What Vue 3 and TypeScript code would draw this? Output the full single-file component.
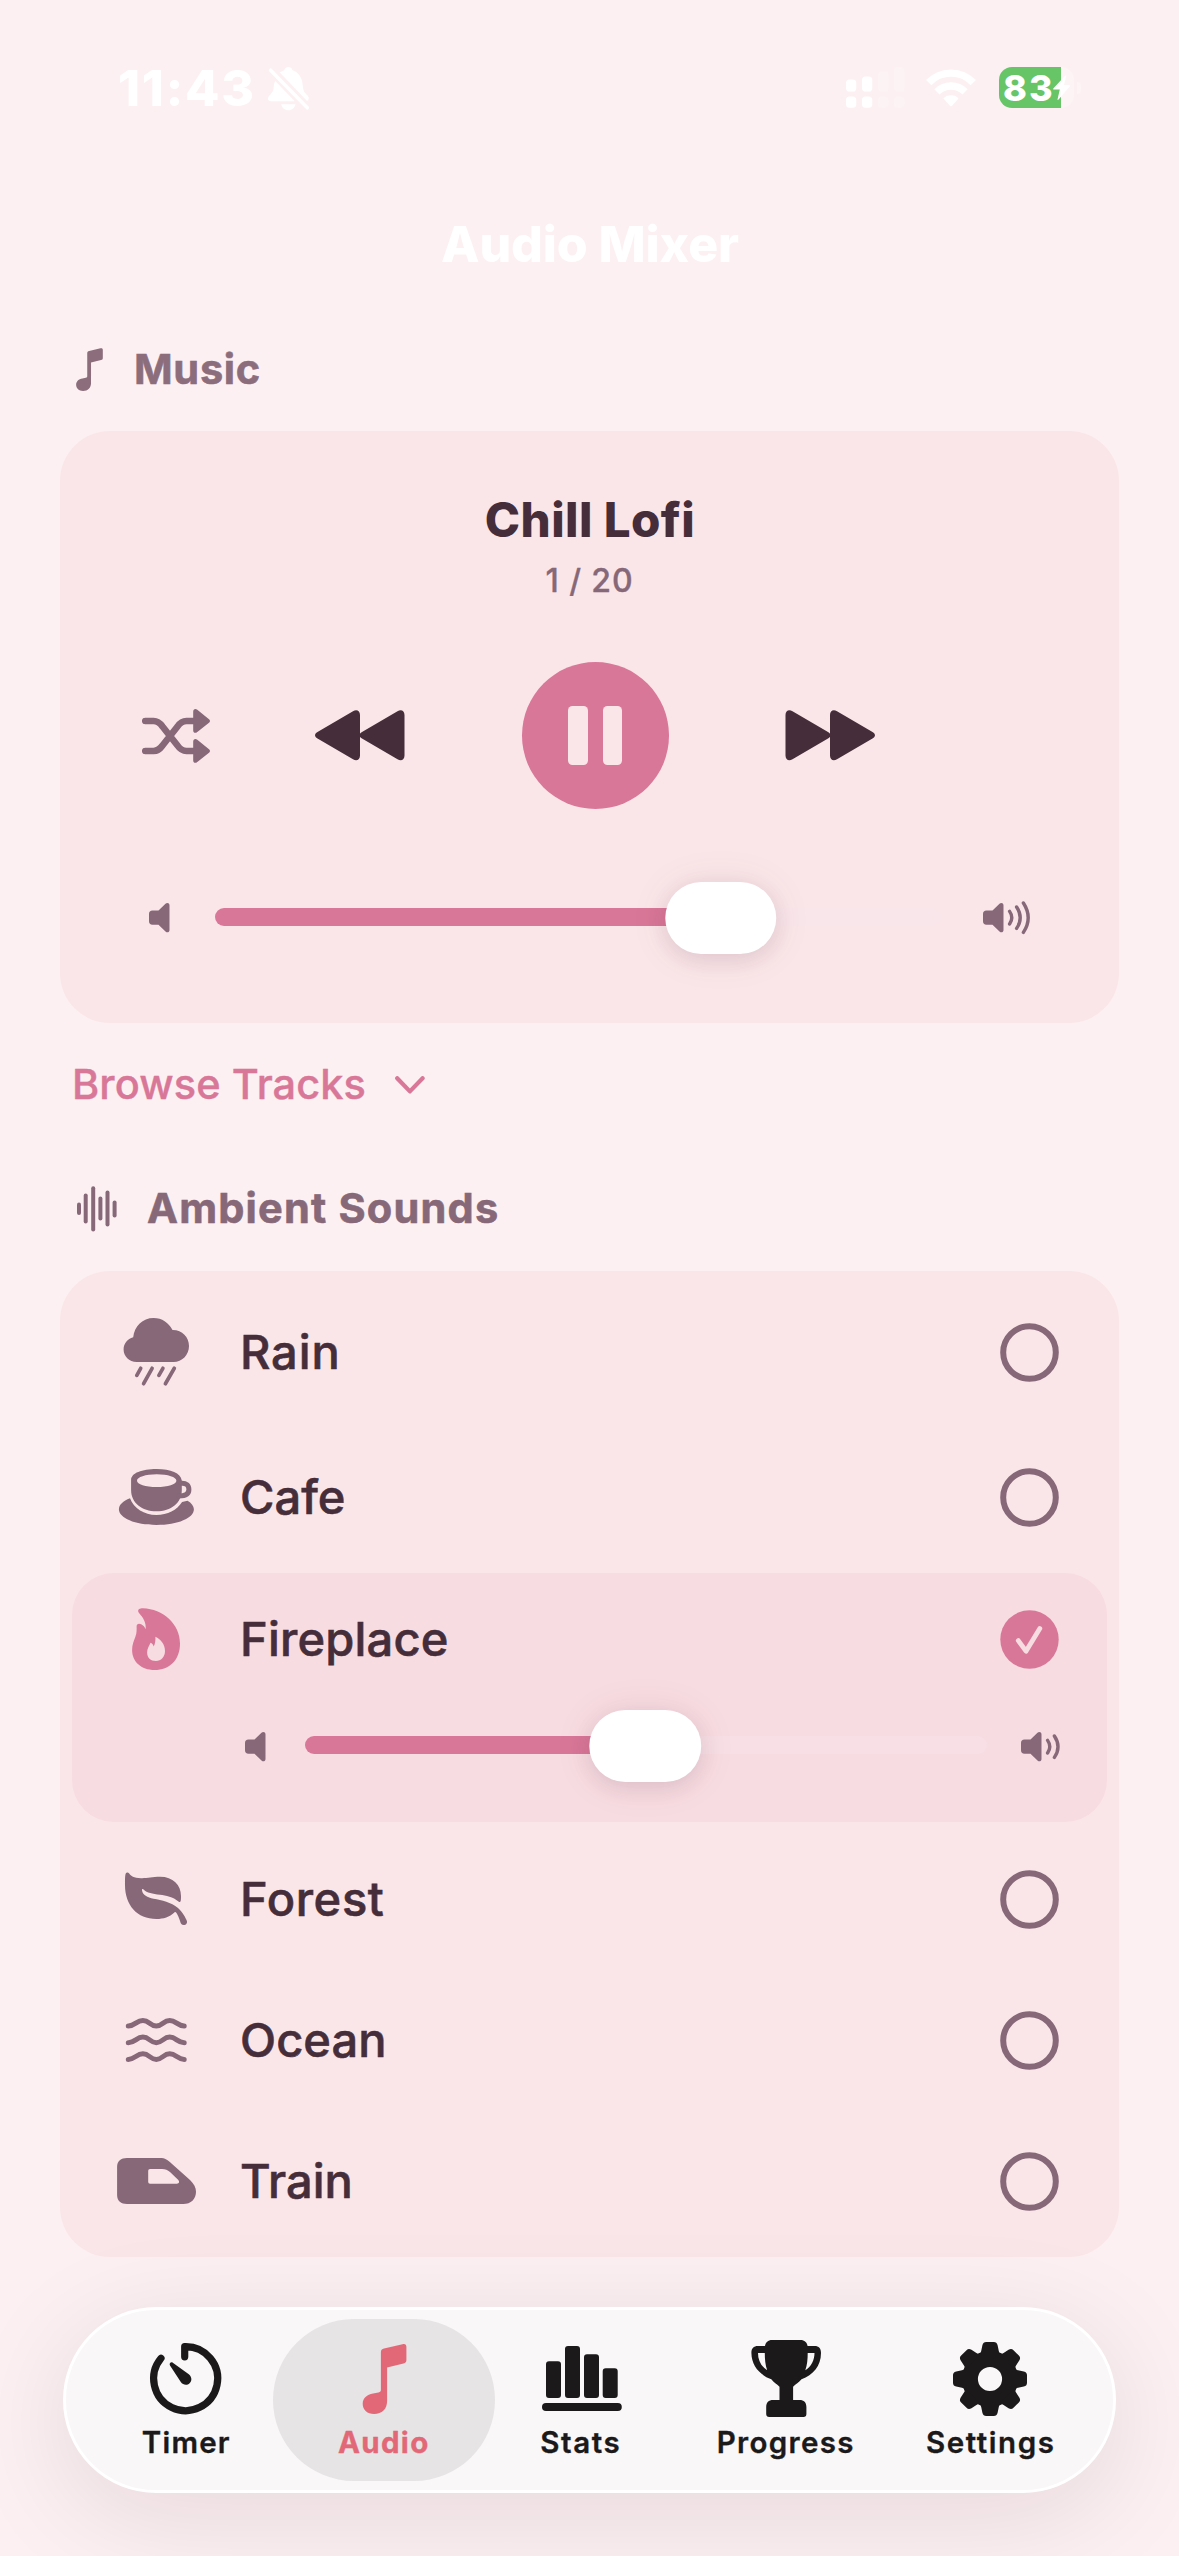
<script setup lang="ts">
import { ref } from 'vue'

interface Shape {
  d: string
  stroke?: number
}

interface Sound {
  id: string
  name: string
  spacing: number
  size: 'tall' | 'medium' | 'regular'
  icon: Shape[]
}

interface Tab {
  id: string
  label: string
  spacing: number
  width: number
  icon: Shape[]
}

const noteIcon =
  'M42 9.6L60.5 5.2C63 4.6 64.4 5.4 64.4 8V21C64.4 23 63.6 24 61.5 24.6L45.1 28.5V62C45.1 70 40 75 32 75C25.5 75 20.7 71 20.7 65C20.7 59 25 55.8 31 54.6L36.5 53.4C38.3 53 38.9 52.3 38.9 50.5V13.5C38.9 11 39.8 10.1 42 9.6Z'
const speakerIcon =
  'M3.5 7.5H9.5L16.5 .8C18 -.5 20.5 0 20.5 2.5V27C20.5 29.5 18 30 16.5 28.5L9.5 21.8H3.5C1.2 21.8 0 20.6 0 18.3V11C0 8.7 1.2 7.5 3.5 7.5Z'

const sounds: Sound[] = [
  {
    id: 'rain',
    name: 'Rain',
    spacing: 0.9,
    size: 'tall',
    icon: [
      { d: 'M22.8 52C15 52 9.6 46 9.6 39.5C9.6 33.5 13.5 29 19.2 27.3C20.5 16 28.5 8 39.6 8C48 8 54.5 12.5 58.5 20C68 19.8 75 27 75 36C75 45 68 52 59.6 52Z' },
      { d: 'M26.7 58.3L22.8 65.3M38.1 58.3L29.6 73.7M48.9 58.3L44.9 65.3M60.3 58.3L51.4 73.7', stroke: 3.7 },
    ],
  },
  {
    id: 'cafe',
    name: 'Cafe',
    spacing: 0,
    size: 'medium',
    icon: [
      { d: 'M17.1 25C17.1 18 28 14 42.5 14C57 14 66.5 18 67.8 25.5V35C67.8 48 57 56.3 42.5 56.3C28 56.3 17.1 48 17.1 35ZM23 25.7C23 29.2 31.5 32 42.7 32C54 32 62.4 29.2 62.4 25.7C62.4 22.2 54 19.3 42.7 19.3C31.5 19.3 23 22.2 23 25.7Z' },
      { d: 'M67 28.2C72.3 27.8 74.9 30.3 74.9 34.5C74.9 39 71.3 41 65 41', stroke: 5 },
      { d: 'M16 43.3C9 46 4.9 50 4.9 54.3C4.9 63 21 70 42.4 70C64 70 79.9 63 79.9 54.3C79.9 51 77.5 48 73.5 45.7L68.1 47C63 55 53.5 60 42.4 60C30 60 20 53.5 16 43.3Z' },
    ],
  },
  {
    id: 'fireplace',
    name: 'Fireplace',
    spacing: 0.2,
    size: 'regular',
    icon: [
      { d: 'M24.2 14.5C23.8 12.3 25.8 11.3 28.9 11.3C49 12 66 27 66 46.5C66 63 55.5 73 40.6 73C27 73 18.1 64.5 18.1 53C18.1 47.5 19.8 44 21.3 40C23 35.5 22.6 32.5 22.6 29.5C22.6 26.5 25 26.3 27.2 27.3C29.3 28.3 30.8 30 31.7 32.3C32.2 25 29 20.5 25.2 16.2C24.6 15.5 24.3 15 24.2 14.5ZM41.4 39.7C41.6 43 41.3 46.5 39.7 49.5C39 47.5 38 46 36.5 45.8C35.3 49 33.1 51.5 33.1 55.5C33.1 60.5 36.5 64 42 64C47 64 51 60 51 54C51 47 46.5 42 41.4 39.7Z' },
    ],
  },
  {
    id: 'forest',
    name: 'Forest',
    spacing: 0.65,
    size: 'regular',
    icon: [
      { d: 'M11 28C11 22 11 19 11.6 17C12.2 15.2 14 15 15.2 16.5C17 19 19.5 21 27 21.2C33 21.4 38 19.8 46 19.8C59 19.8 67 28 67 39C67 41.5 67 43 66.6 44.3C66.2 45.3 65.2 45.3 64.5 44.5C59 40 52 38.6 46 37.8C38.5 36.8 33 36 29.6 32.5C28.6 31.5 27.8 32 28 33.2C28.6 38 33.5 40.5 39.5 41.7C48 43.3 57 45 64 51C69 55.5 71.5 60.5 72.9 64C73.5 66.5 71.8 68 69.8 68C67.5 68 66.8 66.5 66.2 64.5C65 60.5 63.5 57.5 62.3 55.8C61.6 54.9 61 55 60.4 55.5C55.5 60 49.5 62 42.5 62C23 62 11 48 11 28Z' },
    ],
  },
  {
    id: 'ocean',
    name: 'Ocean',
    spacing: 0.1,
    size: 'regular',
    icon: [28, 44.7, 61.4].map((y) => ({
      d: `M14.3 ${y}C21 ${y} 22.5 ${y - 5.6} 28.9 ${y - 5.6}C35.3 ${y - 5.6} 36 ${y} 42.3 ${y}C48.6 ${y} 49.3 ${y - 5.6} 55.7 ${y - 5.6}C62 ${y - 5.6} 63.5 ${y} 70.2 ${y}`,
      stroke: 5,
    })),
  },
  {
    id: 'train',
    name: 'Train',
    spacing: 0,
    size: 'regular',
    icon: [
      { d: 'M13 19H46C51 19 54 21 57.5 24.5L76 41C80 45 82 48.5 82 52.7C82 60 77 65 69.2 65H13C7 65 3.1 62 3.1 56V28C3.1 22 7 19 13 19ZM36 30Q34.2 30 34.2 31.8V43Q34.2 44.7 36 44.7H63C65 44.7 65.8 42.8 64.3 41L56 33C53.5 31 51.5 30 48 30Z' },
    ],
  },
]

const tabs: Tab[] = [
  {
    id: 'timer',
    label: 'Timer',
    spacing: 1.2,
    width: 197,
    icon: [
      { d: 'M41.7 17.8V7.6A32 32 0 1 1 18 19.2', stroke: 7.2 },
      { d: 'M27 26.5C25.8 24.6 28 22.4 29.8 23.7L45.8 35.3C49 38 49.2 42 46.6 44.3C44 46.8 39.8 46 37.8 43Z' },
    ],
  },
  { id: 'audio', label: 'Audio', spacing: 1.33, width: 198, icon: [{ d: noteIcon }] },
  {
    id: 'stats',
    label: 'Stats',
    spacing: 1.6,
    width: 196,
    icon: [
      { d: 'M11 22.3H20Q23 22.3 23 25.3V56Q23 59 20 59H11Q8 59 8 56V25.3Q8 22.3 11 22.3ZM30 7H39Q42 7 42 10V56Q42 59 39 59H30Q27 59 27 56V10Q27 7 30 7ZM49 15.3H58Q61 15.3 61 18.3V56Q61 59 58 59H49Q46 59 46 56V18.3Q46 15.3 49 15.3ZM67.7 29.3H76.7Q79.7 29.3 79.7 32.3V56Q79.7 59 76.7 59H67.7Q64.7 59 64.7 56V32.3Q64.7 29.3 67.7 29.3Z' },
      { d: 'M8 68H79.8', stroke: 8 },
    ],
  },
  {
    id: 'progress',
    label: 'Progress',
    spacing: 1.35,
    width: 214,
    icon: [
      { d: 'M29 1H57.5C61.5 1 64 3.5 64.6 7H71.5C76 7 78 9.5 78 14C78 27 70 36 58.5 40.3C55.5 43.5 53 45 50.1 47.8V61H56.5C61 61 63.4 63.5 63.4 68V75C63.4 77 62.4 78 60.4 78H26.2C24.2 78 23.2 77 23.2 75V68C23.2 63.5 25.6 61 30.1 61H36.5V47.8C33.6 45 31 43.5 28.3 40.3C17 36 8.6 27 8.4 14C8.3 9.5 10.5 7 15 7H22C22.6 3.5 25 1 29 1ZM15 14C15 21 18 27.5 24.2 31.3C22.3 26 21.8 20 21.8 14ZM71.5 14H64.7C64.7 20 64.2 26 62.3 31.3C68.5 27.5 71.5 21 71.5 14Z' },
    ],
  },
  { id: 'settings', label: 'Settings', spacing: 1.55, width: 196, icon: [] },
]

const activeTab = ref('audio')
const activeSound = ref('fireplace')
const musicVolume = ref(0.6963)
const soundVolume = ref(0.4996)
const waveBars = [
  [4, 18, 29.5],
  [10.7, 9, 38],
  [18.2, 1.7, 46],
  [25.4, 12, 35],
  [32.5, 6, 41],
  [39.6, 16, 32],
]
const toothAngles = [0, 45, 90, 135, 180, 225, 270, 315]
</script>

<template>
  <main class="screen">
    <header class="status">
      <span class="clock">11:43</span>
      <svg class="bell" width="42" height="44" viewBox="0 0 42 44">
        <path d="M11.8 5.6C13.5 4.6 15 4 16.2 3.2C17 1 18.5 0 20.4 0C22.3 0 23.8 1 24.6 3.2C31 5.5 34.5 11 34.8 19C35 24 37 26 39.3 28.3C41.5 30.5 41 33 39 34Z" />
        <path d="M7.2 14L26.8 34.3H3.2C-.5 34.3-.8 31 1.2 28.8C4.5 25.5 5.5 24 5.8 19C6 17 6.5 15.5 7.2 14Z" />
        <path d="M13.2 37.3H27.5C26.7 41 24 43.3 20.3 43.3C16.7 43.3 14 41 13.2 37.3Z" />
        <path class="line" d="M2.6 3.2L39.3 40.8" stroke-width="3.6" />
      </svg>
      <svg class="signal" width="59" height="41" viewBox="0 0 59 41">
        <rect x="0" y="12.5" width="10.3" height="12" rx="3.6" />
        <rect x="16" y="9.5" width="10.3" height="15" rx="3.6" />
        <rect x="0" y="29.5" width="10.3" height="11.3" rx="3.6" />
        <rect x="16" y="29.5" width="10.3" height="11.3" rx="3.6" />
        <g opacity=".25">
          <rect x="32" y="4.5" width="10.3" height="20" rx="3.6" />
          <rect x="48" y="0" width="10.3" height="24.5" rx="3.6" />
          <rect x="32" y="29.5" width="10.3" height="11.3" rx="3.6" />
          <rect x="48" y="29.5" width="10.3" height="11.3" rx="3.6" />
        </g>
      </svg>
      <svg class="wifi" width="50" height="38" viewBox="0 0 50 38">
        <path class="arc" d="M2.7 13.6A31 31 0 0 1 47.3 13.6" />
        <path class="arc" d="M10.9 22.8A20 20 0 0 1 39.1 22.8" />
        <path d="M17.5 29.6C20.5 25 29.5 25 32.5 29.6L26.3 36.6Q25 37.9 23.7 36.6Z" />
      </svg>
      <div class="battery">
        <span class="percent">83</span>
        <svg class="bolt" width="18" height="26" viewBox="0 0 18 26">
          <path d="M12.6.3Q13.5 0 13.1 1.2L11 10.2H16.3Q17.6 10.3 16.7 11.6L5.6 24.6Q4.2 25.6 4.6 24L6.8 14.6H1Q-.4 14.4.5 13.2Z" />
        </svg>
      </div>
      <i class="nub"></i>
    </header>

    <h1 class="title">Audio Mixer</h1>

    <h2 class="heading music-heading">
      <svg width="27" height="43" viewBox="20.5 4.8 44.2 70.4"><path :d="noteIcon" /></svg>
      <span>Music</span>
    </h2>

    <section class="card player">
      <p class="track-name">Chill Lofi</p>
      <p class="track-count">1 / 20</p>
      <div class="controls">
        <svg class="shuffle" width="68" height="54" viewBox="0 0 68 54">
          <path class="line" stroke-width="6.6" d="M3.2 12H11.5C15.5 12 18 14 20.5 17.5L35.5 36.5C38 40.2 40.5 42 44.5 42H53M3.2 42H11.5C15.5 42 18 40 20.5 36.5L35.5 17.5C38 13.8 40.5 12 44.5 12H53" />
          <path d="M51.2 2.5C51.2 0 53.5-.7 55.3 .8L67 10.2C68.3 11.3 68.3 12.7 67 13.8L55.3 23C53.5 24.5 51.2 24 51.2 21.5ZM51.2 32.5C51.2 30 53.5 29.3 55.3 30.8L67 40.2C68.3 41.3 68.3 42.7 67 43.8L55.3 53C53.5 54.5 51.2 54 51.2 51.5Z" />
        </svg>
        <svg class="skip" width="90" height="51" viewBox="0 0 90 51">
          <path d="M45 5V45.5C45 50 41.5 51.5 38 49.3L2.5 28.5C-.8 26.5-.8 24 2.5 22L38 1.2C41.5-1 45 .5 45 5ZM89.5 5V45.5C89.5 50 86 51.5 82.5 49.3L47 28.5C43.7 26.5 43.7 24 47 22L82.5 1.2C86-1 89.5 .5 89.5 5Z" />
        </svg>
        <button class="pause" aria-label="Pause"><i></i><i></i></button>
        <svg class="skip forward" width="90" height="51" viewBox="0 0 90 51">
          <path d="M45 5V45.5C45 50 41.5 51.5 38 49.3L2.5 28.5C-.8 26.5-.8 24 2.5 22L38 1.2C41.5-1 45 .5 45 5ZM89.5 5V45.5C89.5 50 86 51.5 82.5 49.3L47 28.5C43.7 26.5 43.7 24 47 22L82.5 1.2C86-1 89.5 .5 89.5 5Z" />
        </svg>
      </div>
      <div class="volume music-volume">
        <svg width="21" height="34" viewBox="0 -2 21 34"><path :d="speakerIcon" /></svg>
        <div class="track">
          <div class="fill" :style="{ width: musicVolume * 100 + '%' }"></div>
          <div class="thumb" :style="{ left: musicVolume * 100 + '%' }"></div>
        </div>
        <svg width="48" height="34" viewBox="0 -2 48 34">
          <path :d="speakerIcon" />
          <path class="line" stroke-width="3.4" d="M26.6 8.4Q31 14.7 26.6 21M33.6 4Q40.8 14.7 33.6 25.4M40.4 0Q50 14.7 40.4 29.4" />
        </svg>
      </div>
    </section>

    <button class="browse">
      <span>Browse Tracks</span>
      <svg width="30" height="18" viewBox="0 0 30 18"><path class="line" stroke-width="4.2" d="M2.2 2.2L14.9 15.4L27.6 2.2" /></svg>
    </button>

    <h2 class="heading ambient-heading">
      <svg width="43" height="48" viewBox="0 0 43 48">
        <path v-for="[x, top, bottom] in waveBars" :key="x" class="line" stroke-width="4" :d="`M${x} ${top + 1.6}V${bottom - 1.6}`" />
      </svg>
      <span>Ambient Sounds</span>
    </h2>

    <section class="card sounds">
      <div v-for="s in sounds" :key="s.id" :class="['sound', s.size, { active: s.id === activeSound }]">
        <div class="sound-row">
          <svg class="sound-icon" width="84" height="84" viewBox="0 0 84 84">
            <path v-for="(p, i) in s.icon" :key="i" :d="p.d" :class="{ line: p.stroke }" :stroke-width="p.stroke" fill-rule="evenodd" />
          </svg>
          <span class="sound-name" :style="{ letterSpacing: s.spacing + 'px' }">{{ s.name }}</span>
          <svg class="check" width="59" height="59" viewBox="0 0 59 59">
            <template v-if="s.id === activeSound">
              <circle cx="29.5" cy="29.5" r="29.2" />
              <path class="tick" d="M18.3 30.6L26 41.2L39.8 18.6" />
            </template>
            <circle v-else class="line" cx="29.5" cy="29.5" r="26.3" stroke-width="6" />
          </svg>
        </div>
        <div v-if="s.id === activeSound" class="volume sound-volume">
          <svg width="21" height="34" viewBox="0 -2 21 34"><path :d="speakerIcon" /></svg>
          <div class="track">
            <div class="fill" :style="{ width: soundVolume * 100 + '%' }"></div>
            <div class="thumb" :style="{ left: soundVolume * 100 + '%' }"></div>
          </div>
          <svg width="40" height="34" viewBox="0 -2 40 34">
            <path :d="speakerIcon" />
            <path class="line" stroke-width="3.4" d="M26.6 8.4Q31 14.7 26.6 21M33.4 4Q40.6 14.7 33.4 25.4" />
          </svg>
        </div>
      </div>
    </section>

    <nav class="tabbar">
      <a v-for="t in tabs" :key="t.id" :class="['tab', t.id, { current: t.id === activeTab }]" :style="{ width: t.width + 'px' }">
        <svg width="84" height="80" viewBox="0 0 84 80">
          <path v-for="(p, i) in t.icon" :key="i" :d="p.d" :class="{ line: p.stroke }" :stroke-width="p.stroke" fill-rule="evenodd" />
          <g v-if="t.id === 'settings'">
            <circle class="line" cx="42" cy="40" r="20" stroke-width="15.8" />
            <path
              v-for="a in toothAngles"
              :key="a"
              :transform="`translate(42 40) rotate(${a})`"
              d="M-12-24C-10-25.2-9.2-26-8.8-28L-7.6-33.8C-7-36.2-5.8-37-3.8-37H3.8C5.8-37 7-36.2 7.6-33.8L8.8-28C9.2-26 10-25.2 12-24Z"
            />
          </g>
        </svg>
        <span :style="{ letterSpacing: t.spacing + 'px' }">{{ t.label }}</span>
      </a>
    </nav>
  </main>
</template>

<style>
body {
  background: #fcf0f2;
}
</style>

<style scoped>
.screen {
  box-sizing: border-box;
  width: 1179px;
  height: 2556px;
  overflow: hidden;
  display: flex;
  flex-direction: column;
  background: #fcf0f2;
  color: #452d3a;
  font-family: Inter, 'Liberation Sans', sans-serif;
}
h1,
h2,
p {
  margin: 0;
}
button {
  border: 0;
  padding: 0;
  background: none;
  font: inherit;
}
svg {
  display: block;
  flex: none;
  fill: currentColor;
}
.line {
  fill: none;
  stroke: currentColor;
  stroke-linecap: round;
  stroke-linejoin: round;
}

/* Status bar */
.status {
  display: flex;
  align-items: center;
  height: 175px;
  padding-left: 118px;
  color: #fff;
}
.clock {
  width: 149.5px;
  font-size: 50px;
  font-weight: 800;
  letter-spacing: 1.78px;
}
.bell {
  margin-top: 2px;
}
.signal {
  margin-left: 536.5px;
}
.wifi {
  margin-left: 21.3px;
}
.arc {
  fill: none;
  stroke: currentColor;
  stroke-width: 7.4;
}
.battery {
  display: flex;
  align-items: center;
  width: 75px;
  height: 41px;
  margin-left: 22.7px;
  border-radius: 13px;
  background: linear-gradient(90deg, #67c568 62px, rgba(255, 255, 255, 0.28) 62px);
}
.percent {
  width: 50.3px;
  padding-left: 4px;
  font-size: 36px;
  font-weight: 800;
  letter-spacing: 2px;
}
.bolt {
  margin-top: 1px;
}
.nub {
  width: 4px;
  height: 12px;
  margin-left: 3px;
  border-radius: 0 4px 4px 0;
  background: rgba(255, 255, 255, 0.28);
}

.title {
  height: 138px;
  text-align: center;
  line-height: 138px;
  text-indent: 1px;
  font-size: 50px;
  font-weight: 800;
  letter-spacing: -0.13px;
  color: #fff;
}

/* Section headings */
.heading {
  display: flex;
  align-items: center;
  font-size: 41.5px;
  font-weight: 700;
  -webkit-text-stroke: 0.6px currentColor;
  color: #866878;
}
.music-heading {
  height: 112px;
  margin-bottom: 6px;
  padding-left: 76px;
  gap: 31px;
  letter-spacing: 0.7px;
  color: #8b6d7c;
}
.ambient-heading {
  height: 125px;
  padding-left: 75px;
  gap: 29px;
  letter-spacing: 1.2px;
}
.ambient-heading span {
  margin-top: -1.5px;
}

.card {
  box-sizing: border-box;
  margin: 0 60px;
  border-radius: 50px;
  background: #fae6e8;
}

/* Player */
.player {
  height: 592px;
  padding-top: 59px;
  text-align: center;
}
.track-name {
  line-height: 60px;
  text-indent: 1px;
  font-size: 47.5px;
  font-weight: 800;
  letter-spacing: 0.45px;
}
.track-count {
  line-height: 61px;
  font-size: 32px;
  font-weight: 500;
  -webkit-text-stroke: 0.35px currentColor;
  letter-spacing: 0.9px;
  color: #866878;
}
.controls {
  display: flex;
  align-items: center;
  height: 147px;
  margin-top: 51px;
  padding-left: 82px;
}
.shuffle {
  color: #866878;
}
.skip {
  margin-left: 104.6px;
}
.pause {
  display: flex;
  align-items: center;
  justify-content: center;
  gap: 14.4px;
  width: 147px;
  height: 147px;
  margin-left: 117.4px;
  border-radius: 50%;
  background: #d97798;
}
.pause i {
  width: 19.8px;
  height: 58.4px;
  border-radius: 4.5px;
  background: #fae6e8;
}
.forward {
  margin-left: 116.5px;
  transform: scaleX(-1);
}

/* Sliders */
.volume {
  display: flex;
  align-items: center;
  height: 72px;
  color: #866878;
}
.music-volume {
  margin-top: 73px;
  padding-left: 88.6px;
}
.music-volume .track {
  width: 726.5px;
  margin: -2.5px 41.5px 0 45.4px;
  background: #f9e6ea;
}
.sound-volume {
  padding-left: 173px;
}
.sound-volume .track {
  width: 681.5px;
  margin: -2.5px 34.5px 0 39px;
  background: #f7dfe5;
}
.track {
  position: relative;
  height: 18px;
  border-radius: 9px;
}
.fill {
  height: 18px;
  border-radius: 9px;
  background: #d97798;
}
.thumb {
  position: absolute;
  top: -26px;
  width: 111.5px;
  height: 72px;
  border-radius: 36px;
  background: #fff;
  box-shadow: 0 2px 40px rgba(100, 40, 80, 0.09), 0 6px 20px rgba(90, 40, 70, 0.1);
  transform: translateX(-50%);
}

.browse {
  display: flex;
  align-items: center;
  gap: 29px;
  height: 123px;
  padding-left: 72px;
  font-size: 41.5px;
  font-weight: 500;
  -webkit-text-stroke: 0.4px currentColor;
  letter-spacing: 0.1px;
  color: #d97798;
}
.browse span {
  margin-top: -1.5px;
}

/* Ambient sounds */
.sounds {
  height: 986px;
  padding: 6px 0;
}
.sound-row {
  display: flex;
  align-items: center;
  height: 141px;
  padding-left: 54px;
}
.tall .sound-row {
  height: 150px;
}
.medium .sound-row {
  height: 140px;
}
.active {
  box-sizing: border-box;
  height: 249px;
  margin: 6px 12px;
  border-radius: 42px;
  background: #f7dce1;
}
.active .sound-row {
  height: 132px;
  padding-left: 42px;
}
.active .sound-volume {
  margin-top: 5.5px;
}
.sound-icon {
  color: #866878;
}
.active .sound-icon,
.active .check {
  color: #d97798;
}
.sound-name {
  width: 761px;
  margin-left: 42px;
  font-size: 47px;
  font-weight: 500;
  -webkit-text-stroke: 0.6px currentColor;
}
.tall .sound-name,
.medium .sound-name,
.active .sound-name {
  margin-top: -1.5px;
}
.check {
  margin-left: -0.6px;
  margin-top: 1px;
  color: #866878;
}
.tall .check,
.medium .check {
  margin-top: 0;
}
.tick {
  fill: none;
  stroke: #f7dce1;
  stroke-width: 4.8;
  stroke-linecap: round;
  stroke-linejoin: round;
}

/* Tab bar */
.tabbar {
  box-sizing: border-box;
  display: flex;
  width: 1053px;
  height: 186px;
  margin: 50px 0 0 63px;
  padding-left: 21px;
  border: 3px solid #fff;
  border-radius: 93px;
  background: #f9f7f8;
  box-shadow: 0 22px 110px rgba(40, 0, 20, 0.1);
  color: #1b191a;
}
.tab {
  position: relative;
  display: flex;
  flex-direction: column;
  align-items: center;
  padding-top: 29px;
  font-size: 29.5px;
  font-weight: 600;
  -webkit-text-stroke: 0.35px currentColor;
}
.tab svg,
.tab span {
  position: relative;
}
.tab span {
  line-height: 36px;
  margin: 5px 0 0 1.5px;
}
.timer svg {
  margin-left: -1.5px;
}
.audio svg {
  margin-left: 1px;
}
.current {
  color: #e36877;
  font-weight: 700;
}
.current::before {
  content: '';
  position: absolute;
  top: 9px;
  left: -11.5px;
  width: 222px;
  height: 162px;
  border-radius: 81px;
  background: #e6e4e5;
}
</style>
